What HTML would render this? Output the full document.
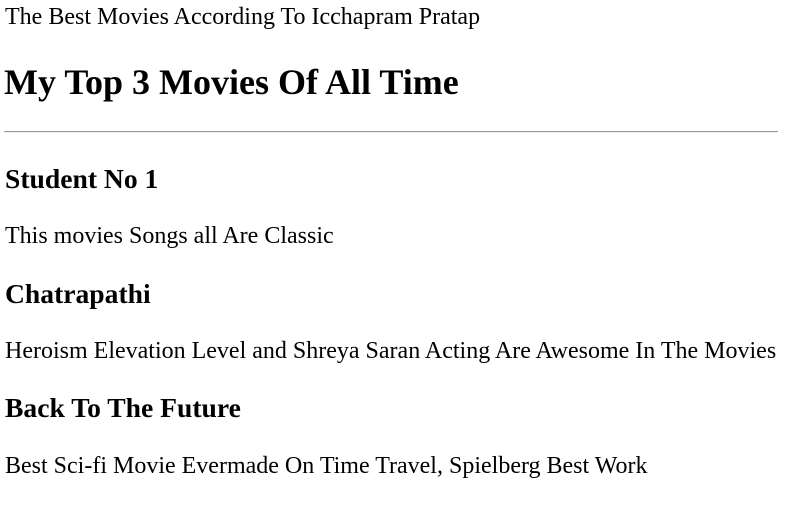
<!DOCTYPE html>
<html><head><style>
body{margin:0;width:787px;height:512px;background:#fff;font-family:"Liberation Serif",serif;color:#000;position:relative;overflow:hidden}
div{position:absolute;left:5px;white-space:nowrap}
.p{font-size:24px;line-height:26px}
.h1{font-size:36px;font-weight:bold;line-height:42px;left:4px}
.h3{font-size:27.6px;font-weight:bold;line-height:30px}
hr{position:absolute;left:4px;width:774px;top:131px;margin:0;border:0;border-top:1px solid #9a9a9a;border-bottom:1px solid #eee;height:0}
</style></head><body>
<div class="p" style="top:4px">The Best Movies According To Icchapram Pratap</div>
<div class="h1" style="top:61px">My Top 3 Movies Of All Time</div>
<hr>
<div class="h3" style="top:164px">Student No 1</div>
<div class="p" style="top:223px">This movies Songs all Are Classic</div>
<div class="h3" style="top:279px">Chatrapathi</div>
<div class="p" style="top:338px">Heroism Elevation Level and Shreya Saran Acting Are Awesome In The Movies</div>
<div class="h3" style="top:393px">Back To The Future</div>
<div class="p" style="top:453px">Best Sci-fi Movie Evermade On Time Travel, Spielberg Best Work</div>
</body></html>
